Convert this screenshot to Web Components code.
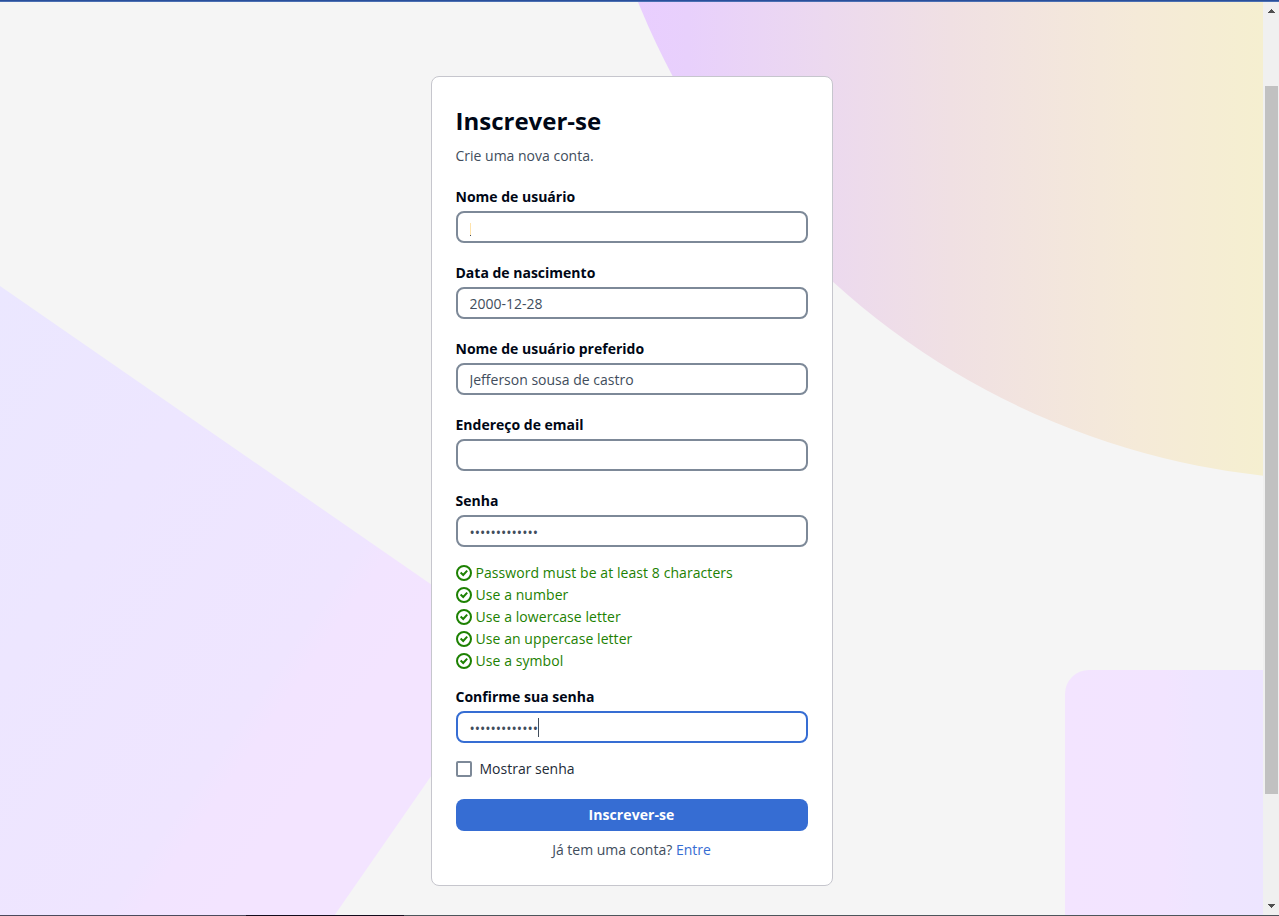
<!DOCTYPE html>
<html lang="pt-BR">
<head>
<meta charset="utf-8">
<title>Inscrever-se</title>
<style>
html,body{margin:0;height:100%;overflow:hidden}
body{font:14px/20px "Open Sans","Noto Sans",sans-serif;color:#414d5c}
</style>
</head>
<body>
<app-window>
  <signup-card>
    <form-field label="Nome de usuário"><typed-edge></typed-edge></form-field>
    <form-field label="Data de nascimento">2000-12-28</form-field>
    <form-field label="Nome de usuário preferido">Jefferson sousa de castro</form-field>
    <form-field label="Endereço de email"></form-field>
    <form-field masked label="Senha">•••••••••••••</form-field>
    <rule-list slot="rules">
      <rule-item>Password must be at least 8 characters</rule-item>
      <rule-item>Use a number</rule-item>
      <rule-item>Use a lowercase letter</rule-item>
      <rule-item>Use an uppercase letter</rule-item>
      <rule-item>Use a symbol</rule-item>
    </rule-list>
    <form-field slot="confirm" masked focused label="Confirme sua senha">•••••••••••••</form-field>
    <check-box slot="confirm">Mostrar senha</check-box>
    <primary-button slot="actions">Inscrever-se</primary-button>
    <sign-in-line slot="actions"></sign-in-line>
  </signup-card>
</app-window>
<script>
const define=(name,html)=>customElements.define(name,class extends HTMLElement{
  connectedCallback(){
    if(this.shadowRoot)return;
    const root=this.attachShadow({mode:'open'});
    root.innerHTML=html;
    const label=root.querySelector('[data-label]');
    if(label)label.textContent=this.getAttribute('label');
  }
});

define('page-art',`<style>
:host{display:block;position:absolute;inset:0;z-index:0}
svg{display:block}
</style>
<svg width="1263" height="913" viewBox="0 2 1263 913">
<defs>
<linearGradient id="c" gradientUnits="userSpaceOnUse" x1="638" y1="0" x2="1263" y2="0"><stop offset="0" stop-color="#e9ceff"/><stop offset=".08" stop-color="#e8d0fc"/><stop offset=".3" stop-color="#ecd9ef"/><stop offset=".5" stop-color="#f0e0e3"/><stop offset=".8" stop-color="#f5ead8"/><stop offset="1" stop-color="#f5efd0"/></linearGradient>
<linearGradient id="s" gradientUnits="userSpaceOnUse" x1="0" y1="286" x2="440" y2="590"><stop offset="0" stop-color="#ebe7ff"/><stop offset=".83" stop-color="#efe5ff"/><stop offset=".88" stop-color="#f2e4ff"/><stop offset="1" stop-color="#f3e4ff"/></linearGradient>
<linearGradient id="r" gradientUnits="userSpaceOnUse" x1="1065" y1="0" x2="1263" y2="0"><stop offset="0" stop-color="#f3e4ff"/><stop offset=".5" stop-color="#f2e4ff"/><stop offset=".65" stop-color="#efe5ff"/><stop offset="1" stop-color="#ede5ff"/></linearGradient>
</defs>
<circle cx="1347" cy="-284" r="764.5" fill="url(#c)"/>
<path d="M-10 279L521 646.6L328 924.7H-10Z" fill="url(#s)"/>
<rect x="1065" y="670" width="260" height="300" rx="24" fill="url(#r)"/>
</svg>`);

define('scroll-bar',`<style>
:host{display:flex;flex-direction:column;width:16px;background:#f0f0f0;box-sizing:border-box;justify-content:space-between;align-items:center}
svg{display:block;width:16px;height:17px;flex:none}
.track{flex:1;width:13px;padding-top:67px;padding-left:1px}
.thumb{height:708px;background:#c1c1c1}
</style>
<svg viewBox="0 0 16 17" shape-rendering="crispEdges"><path d="M8 7h1v1h1v1h1v1h1v1H5v-1h1V9h1V8h1z" fill="#505050"/></svg>
<div class="track"><div class="thumb"></div></div>
<svg viewBox="0 0 16 17" shape-rendering="crispEdges"><path d="M5 6h7v1h-1v1h-1v1H9v1H8V9H7V8H6V7H5z" fill="#505050"/></svg>`);

define('app-window',`<style>
:host{display:grid;grid-template-rows:2px 1fr 1px;width:1279px;height:916px;overflow:hidden}
.top{background:linear-gradient(#2a4f9b 50%,#4a6fb2 50%)}
.bottom{background:linear-gradient(90deg,#4c4a5c 246px,#130b1c 246px 404px,#4d555b 404px)}
.row{display:flex;min-height:0}
main{flex:1;position:relative;background:#f5f5f5;overflow:hidden;display:flex;justify-content:center;align-items:flex-start;padding-top:74px}
</style>
<div class="top"></div>
<div class="row"><main><page-art></page-art><slot></slot></main><scroll-bar></scroll-bar></div>
<div class="bottom"></div>`);

define('signup-card',`<style>
:host{display:flex;flex-direction:column;position:relative;z-index:1;box-sizing:border-box;width:402px;height:810px;padding:28px 24px 0;background:#fff;border:1px solid #c6c6cd;border-radius:8px}
h1{margin:0;font-size:24px;line-height:32px;font-weight:700;color:#000716}
p{margin:9px 0 21px}
.fields{display:flex;flex-direction:column;gap:20px}
.rules{margin-top:15px}
.confirm{margin-top:15px;display:flex;flex-direction:column;gap:16px}
.actions{margin-top:20px;display:flex;flex-direction:column;gap:9px}
</style>
<h1>Inscrever-se</h1>
<p>Crie uma nova conta.</p>
<div class="fields"><slot></slot></div>
<div class="rules"><slot name="rules"></slot></div>
<div class="confirm"><slot name="confirm"></slot></div>
<div class="actions"><slot name="actions"></slot></div>`);

define('form-field',`<style>
:host{display:flex;flex-direction:column;gap:4px;--line:#7d8998}
:host([focused]){--line:#366dd3}
label{font-weight:700;color:#000716;line-height:20px}
.box{display:flex;align-items:center;height:32px;box-sizing:border-box;border:2px solid var(--line);border-radius:8px;padding:0 12px;background:#fff;color:#414d5c}
.value{white-space:nowrap;padding-top:1px;overflow:hidden}
:host([masked]) .value{padding-top:3px}
.caret{display:none;width:1px;height:19px;background:#414d5c}
:host([focused]) .caret{display:block}
</style>
<label data-label></label>
<div class="box"><span class="value"><slot></slot></span><span class="caret"></span></div>`);

define('typed-edge',`<style>
:host{display:block;width:1px;height:13px;margin-top:4px;background:linear-gradient(#ffe3ac 12px,#414d5c 12px)}
</style>`);

define('rule-list',`<style>:host{display:flex;flex-direction:column}</style><slot></slot>`);

define('rule-item',`<style>
:host{display:flex;align-items:center;gap:4px;height:22px;color:#1d8102;letter-spacing:.07px}
svg{display:block;width:16px;height:16px;flex:none}
</style>
<svg viewBox="0 0 16 16" fill="none" stroke="#1d8102" stroke-width="2"><circle cx="8" cy="8" r="7"/><path d="M4.6 7.6L7.2 10l4-4.4"/></svg><span><slot></slot></span>`);

define('check-box',`<style>
:host{display:flex;align-items:center;gap:8px;height:20px;color:#232b37}
i{display:block;box-sizing:border-box;width:16px;height:16px;border:2px solid #7d8998;border-radius:2px;background:#fff}
</style><i></i><span><slot></slot></span>`);

define('primary-button',`<style>
:host{display:flex;align-items:center;justify-content:center;height:32px;border-radius:8px;background:#366dd3;color:#fff;font-weight:700;letter-spacing:.07px}
</style><slot></slot>`);

define('sign-in-line',`<style>
:host{display:block;text-align:center}
a{color:#366dd3;text-decoration:none}
</style>Já tem uma conta? <a>Entre</a>`);
</script>
</body>
</html>
